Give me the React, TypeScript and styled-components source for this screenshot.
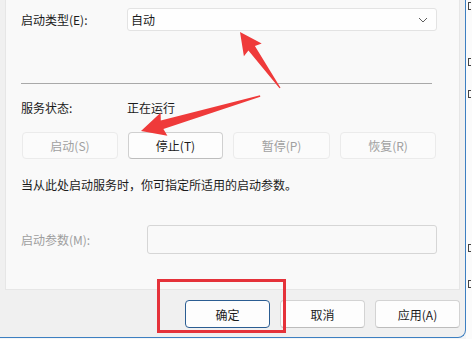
import React from 'react'
import styled, { createGlobalStyle } from 'styled-components'

const GlobalStyle = createGlobalStyle`
  html, body {
    margin: 0;
    padding: 0;
    background: #f4f5f6;
  }
  body {
    font-family: "Noto Sans CJK SC", "Noto Sans", sans-serif;
    font-size: 12px;
    color: #1b1b1b;
  }
`

const Screen = styled.div`
  position: relative;
  width: 472px;
  height: 339px;
  overflow: hidden;
  display: flex;
`

const Window = styled.div`
  width: 466px;
  height: 338px;
  background: #f0f0f0;
  border-right: 1px solid #3d7fc1;
  border-bottom: 1px solid #3d7fc1;
  border-bottom-right-radius: 8px;
  display: flex;
  flex-direction: column;
  padding-left: 5px;
  box-sizing: border-box;
`

/* sliver of the window behind: only fragments of its glyphs show */
const Behind = styled.div`
  flex: 1;
  background: #fbfbfb;
  display: flex;
  flex-direction: column;
  padding-left: 2px;
`

const BehindMark = styled.div<{ $top: number }>`
  margin-top: ${p => p.$top}px;
  width: 3px;
  height: 8px;
  border-left: 1px solid #444;
  border-top: 1px solid #444;
  border-bottom: 1px solid #444;
  box-sizing: border-box;
`

const Panel = styled.div`
  width: 455px;
  height: 290px;
  background: #f9f9f9;
  border-left: 1px solid #e6e6e6;
  border-right: 1px solid #e6e6e6;
  border-bottom: 1px solid #e6e6e6;
  box-sizing: border-box;
  padding: 8px 22px 0 15px;
  display: flex;
  flex-direction: column;
`

const Row = styled.div<{ $label: number }>`
  display: grid;
  grid-template-columns: ${p => p.$label}px 1fr;
  align-items: center;
`

const Label = styled.span<{ $disabled?: boolean }>`
  color: ${p => (p.$disabled ? '#9e9e9e' : '#1b1b1b')};
  line-height: 16px;
`

const Combo = styled.div`
  height: 23px;
  background: #fefefe;
  border: 1px solid #e3e3e3;
  border-radius: 3px;
  box-sizing: border-box;
  display: flex;
  align-items: center;
  justify-content: space-between;
  padding: 0 8px 0 3px;
`

const Separator = styled.div`
  height: 1px;
  background: #a9a9a9;
  margin: 52px 5px 0 0;
`

const StatusRow = styled(Row)`
  margin-top: 16px;
`

const ButtonRow = styled.div`
  display: flex;
  gap: 10px;
  margin-top: 16px;
  padding-left: 1px;
`

const ActionButton = styled.button<{ $width: number; $enabled?: boolean }>`
  width: ${p => p.$width}px;
  height: 27px;
  border-radius: 4px;
  font: inherit;
  font-size: 12px;
  padding: 0;
  background: ${p => (p.$enabled ? '#fdfdfd' : '#fbfbfb')};
  color: ${p => (p.$enabled ? '#1b1b1b' : '#a0a0a0')};
  border: 1px solid ${p => (p.$enabled ? '#d0d0d0' : '#ebebeb')};
  border-bottom-color: ${p => (p.$enabled ? '#bdbdbd' : '#ebebeb')};
`

const Hint = styled.p`
  margin: 18px 0 0;
  line-height: 16px;
`

const ParamRow = styled(Row)`
  margin-top: 32px;
`

const ParamInput = styled.div`
  height: 29px;
  background: #f9f9f9;
  border: 1px solid #d6d6d6;
  border-radius: 3px;
  box-sizing: border-box;
`

const Footer = styled.div`
  display: flex;
  justify-content: flex-end;
  gap: 10px;
  margin-top: 10px;
  width: 455px;
`

const DialogButton = styled.button<{ $default?: boolean }>`
  width: 85px;
  height: 28px;
  border-radius: 4px;
  font: inherit;
  font-size: 12px;
  padding: 0;
  color: #1b1b1b;
  background: #fdfdfd;
  border: 1px solid ${p => (p.$default ? '#2b5d92' : '#d3d3d3')};
  border-bottom-color: ${p => (p.$default ? '#2b5d92' : '#bcbcbc')};
`

const Annotations = styled.svg`
  position: absolute;
  left: 0;
  top: 0;
  pointer-events: none;
`

function Chevron() {
  return (
    <svg width="10" height="6" viewBox="0 0 10 6">
      <path d="M1 1 L5 5 L9 1" fill="none" stroke="#5f5f5f" strokeWidth="1" />
    </svg>
  )
}

export default function App() {
  return (
    <Screen>
      <GlobalStyle />
      <Window>
        <Panel>
          <Row $label={106}>
            <Label>启动类型(E):</Label>
            <Combo>
              <span>自动</span>
              <Chevron />
            </Combo>
          </Row>
          <Separator />
          <StatusRow $label={106}>
            <Label>服务状态:</Label>
            <Label>正在运行</Label>
          </StatusRow>
          <ButtonRow>
            <ActionButton $width={96}>启动(S)</ActionButton>
            <ActionButton $width={95} $enabled>停止(T)</ActionButton>
            <ActionButton $width={97}>暂停(P)</ActionButton>
            <ActionButton $width={96}>恢复(R)</ActionButton>
          </ButtonRow>
          <Hint>当从此处启动服务时，你可指定所适用的启动参数。</Hint>
          <ParamRow $label={126}>
            <Label $disabled>启动参数(M):</Label>
            <ParamInput />
          </ParamRow>
        </Panel>
        <Footer>
          <DialogButton $default>确定</DialogButton>
          <DialogButton>取消</DialogButton>
          <DialogButton>应用(A)</DialogButton>
        </Footer>
      </Window>
      <Behind>
        <BehindMark $top={2} />
        <BehindMark $top={48} />
        <BehindMark $top={24} />
        <BehindMark $top={146} />
        <BehindMark $top={28} />
      </Behind>
      <Annotations width="472" height="339" viewBox="0 0 472 339">
        <polygon
          points="240,32 261.7,43.4 254.9,45.9 280.5,87.7 279.5,88.3 248.4,50.5 243.9,56.2"
          fill="#ef3a3a"
        />
        <polygon
          points="141,131 160.6,112.7 160.8,120.5 260,95.3 260.3,96.7 163.4,129.1 167.4,135.7"
          fill="#ef3a3a"
        />
        <rect x="158.5" y="280.5" width="126" height="51" fill="none" stroke="#e5323a" strokeWidth="3" />
      </Annotations>
    </Screen>
  )
}
